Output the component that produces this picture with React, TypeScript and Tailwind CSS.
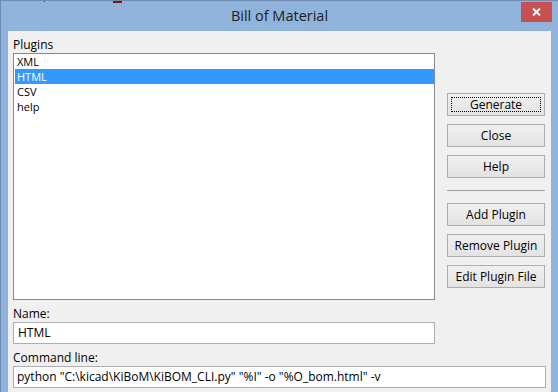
import React from 'react';

const plugins = ['XML', 'HTML', 'CSV', 'help'];
const cmd = 'python "C:\\kicad\\KiBoM\\KiBOM_CLI.py" "%I" -o "%O_bom.html" -v';

const Btn: React.FC<{ label: string; focused?: boolean; className?: string }> = ({ label, focused, className = '' }) => (
  <button
    className={`relative h-[23px] w-full border border-[#adadad] bg-gradient-to-b from-[#f0f0f0] to-[#e3e3e3] text-[12px] text-black leading-none ${className}`}
  >
    {focused && <span className="absolute inset-[3px] border border-dotted border-black" />}
    {label}
  </button>
);

export default function App() {
  return (
    <div
      className="relative w-[558px] h-[392px] overflow-hidden bg-[#8fb3db] border-t border-l border-[#6e8cb2] flex flex-col"
      style={{ fontFamily: '"Open Sans", "Noto Sans", sans-serif' }}
    >
      {/* stuff peeking from behind */}
      <span className="absolute -top-px left-[43px] w-px h-[2px] bg-[#a01818]" />
      <span className="absolute -top-px left-[112px] w-[9px] h-[3px] bg-[#8a1010]" />

      {/* title bar */}
      <div className="relative h-[30px] flex items-center justify-center shrink-0">
        <span className="text-[14.5px] text-[#1e1e1e] -mt-px">Bill of Material</span>
        <div className="absolute top-px right-[6px] w-[31px] h-[20px] bg-[#c75050] flex items-center justify-center">
          <svg width="9" height="8" viewBox="0 0 9 8">
            <path d="M1 0.5 L8 7.5 M8 0.5 L1 7.5" stroke="white" strokeWidth="2" />
          </svg>
        </div>
      </div>

      {/* client area */}
      <div className="ml-[7px] w-[543px] flex-1 bg-[#f0f0f0] px-[5px] pt-[6px] text-[12px] text-black">
        <div className="flex">
          <div className="w-[422px] flex flex-col">
            <div className="h-4 leading-4">Plugins</div>
            <div className="h-[247px] border border-[#828790] bg-white pl-px">
              {plugins.map((p) => (
                <div
                  key={p}
                  className={`h-[15px] leading-[15px] text-[11px] pl-[2px] ${p === 'HTML' ? 'bg-[#3399ff] text-white' : ''}`}
                >
                  {p}
                </div>
              ))}
            </div>
          </div>

          <div className="ml-[12px] w-[98px] pt-[56px] flex flex-col">
            <Btn label="Generate" focused />
            <Btn label="Close" className="mt-2" />
            <Btn label="Help" className="mt-2" />
            <div className="mt-[12px] h-px bg-[#a0a0a0]" />
            <Btn label="Add Plugin" className="mt-[12px]" />
            <Btn label="Remove Plugin" className="mt-2" />
            <Btn label="Edit Plugin File" className="mt-2" />
          </div>
        </div>

        <div className="mt-1.5 h-4 leading-4">Name:</div>
        <div className="w-[422px] h-[22px] border border-[#abadb3] bg-white pl-[4px] leading-[20px]">HTML</div>

        <div className="mt-1.5 h-4 leading-4">Command line:</div>
        <div className="w-full h-[22px] border border-[#abadb3] bg-white pl-[3px] leading-[20px] whitespace-nowrap">
          {cmd}
        </div>
      </div>
    </div>
  );
}
